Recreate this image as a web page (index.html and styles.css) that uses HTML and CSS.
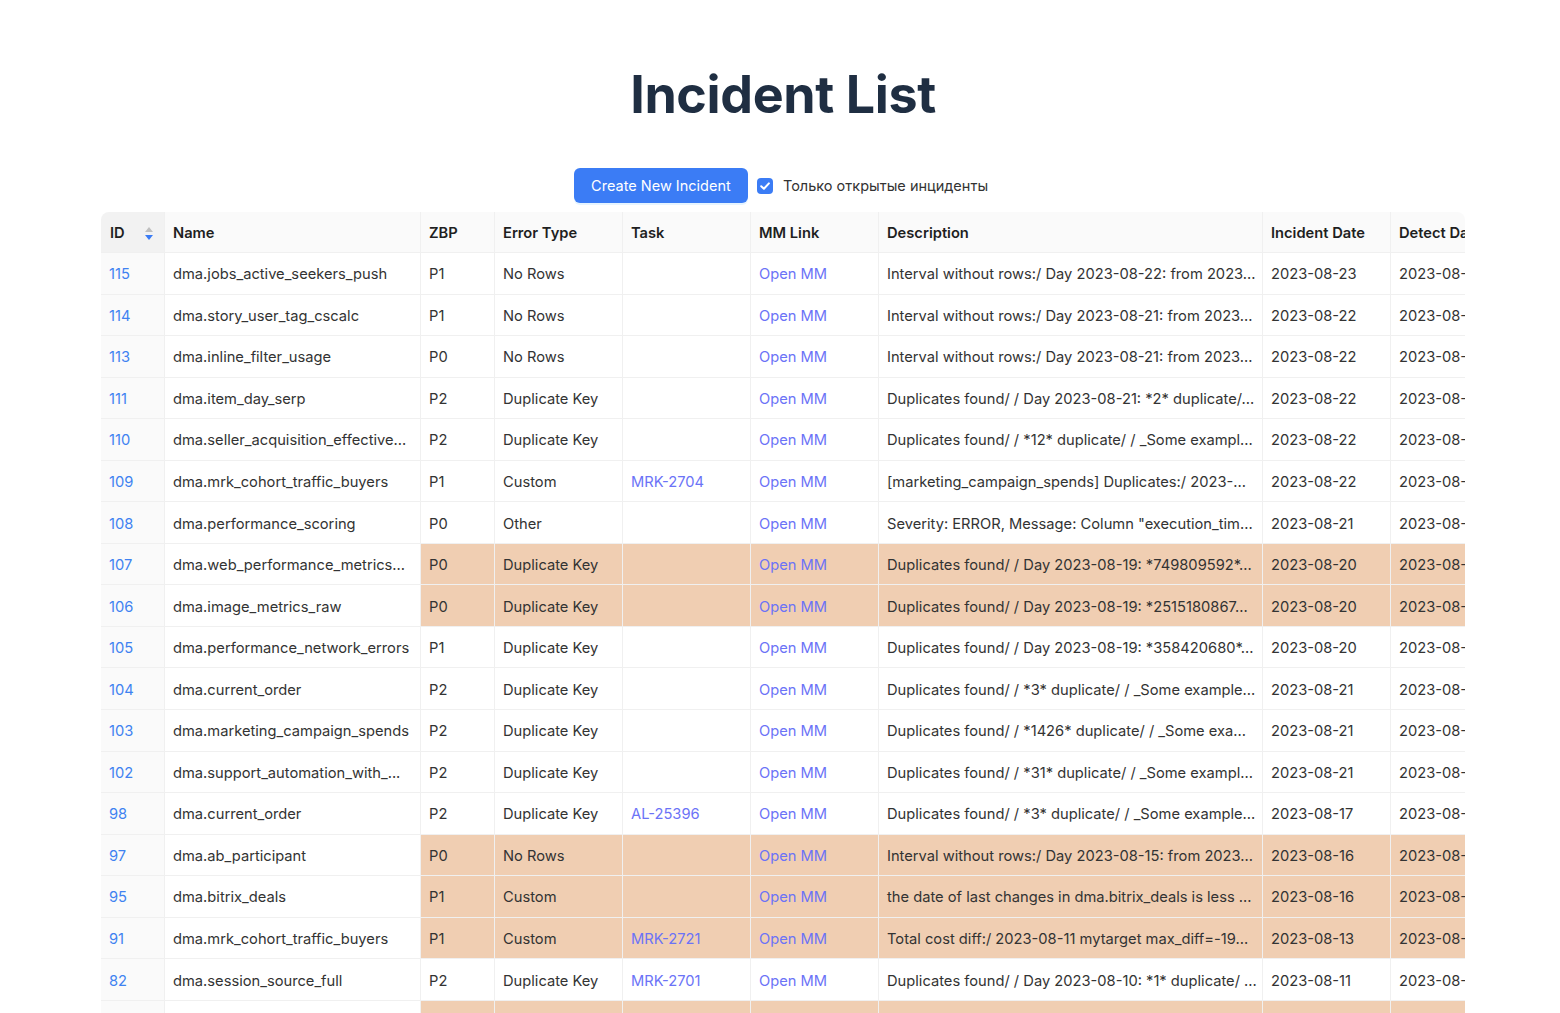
FILE: index.html
```html
<!DOCTYPE html>
<html lang="en">
<head>
<meta charset="utf-8">
<title>Incident List</title>
<link rel="stylesheet" href="styles.css">
</head>
<body>
<div class="page">
  <h1 class="title">Incident List</h1>
  <div class="toolbar">
    <button class="btn-primary" type="button">Create New Incident</button>
    <label class="check">
      <span class="check-box"><svg width="16" height="16" viewBox="0 0 16 16"><rect x="0" y="0" width="16" height="16" rx="4" fill="#3b7cf5"/><path d="M4.2 8.2 L6.9 10.8 L11.9 5.4" fill="none" stroke="#fff" stroke-width="2" stroke-linecap="round" stroke-linejoin="round"/></svg></span>
      <span>Только открытые инциденты</span>
    </label>
  </div>
  <div class="table-wrap">
    <table class="grid">
      <colgroup>
        <col class="c-id"><col class="c-name"><col class="c-zbp"><col class="c-err"><col class="c-task"><col class="c-mm"><col class="c-desc"><col class="c-date"><col class="c-date">
      </colgroup>
      <thead>
        <tr>
          <th class="sorted"><span class="th-sort">ID<svg class="sort" width="10" height="15" viewBox="0 0 10 15"><path d="M5 1 L9 6 L1 6 Z" fill="#bfbfbf"/><path d="M5 14 L9 9 L1 9 Z" fill="#3b7cf5"/></svg></span></th>
          <th>Name</th>
          <th>ZBP</th>
          <th>Error Type</th>
          <th>Task</th>
          <th>MM Link</th>
          <th>Description</th>
          <th>Incident Date</th>
          <th>Detect Date</th>
        </tr>
      </thead>
      <tbody>
        <tr><td class="id"><a>115</a></td><td class="name">dma.jobs_active_seekers_push</td><td>P1</td><td>No Rows</td><td></td><td><a class="lnk">Open MM</a></td><td>Interval without rows:/ Day 2023-08-22: from 2023...</td><td>2023-08-23</td><td>2023-08-23</td></tr>
        <tr><td class="id"><a>114</a></td><td class="name">dma.story_user_tag_cscalc</td><td>P1</td><td>No Rows</td><td></td><td><a class="lnk">Open MM</a></td><td>Interval without rows:/ Day 2023-08-21: from 2023...</td><td>2023-08-22</td><td>2023-08-22</td></tr>
        <tr><td class="id"><a>113</a></td><td class="name">dma.inline_filter_usage</td><td>P0</td><td>No Rows</td><td></td><td><a class="lnk">Open MM</a></td><td>Interval without rows:/ Day 2023-08-21: from 2023...</td><td>2023-08-22</td><td>2023-08-22</td></tr>
        <tr><td class="id"><a>111</a></td><td class="name">dma.item_day_serp</td><td>P2</td><td>Duplicate Key</td><td></td><td><a class="lnk">Open MM</a></td><td>Duplicates found/ / Day 2023-08-21: *2* duplicate/...</td><td>2023-08-22</td><td>2023-08-22</td></tr>
        <tr><td class="id"><a>110</a></td><td class="name">dma.seller_acquisition_effective...</td><td>P2</td><td>Duplicate Key</td><td></td><td><a class="lnk">Open MM</a></td><td>Duplicates found/ / *12* duplicate/ / _Some exampl...</td><td>2023-08-22</td><td>2023-08-22</td></tr>
        <tr><td class="id"><a>109</a></td><td class="name">dma.mrk_cohort_traffic_buyers</td><td>P1</td><td>Custom</td><td><a class="lnk">MRK-2704</a></td><td><a class="lnk">Open MM</a></td><td>[marketing_campaign_spends] Duplicates:/ 2023-...</td><td>2023-08-22</td><td>2023-08-22</td></tr>
        <tr><td class="id"><a>108</a></td><td class="name">dma.performance_scoring</td><td>P0</td><td>Other</td><td></td><td><a class="lnk">Open MM</a></td><td>Severity: ERROR, Message: Column "execution_tim...</td><td>2023-08-21</td><td>2023-08-21</td></tr>
        <tr class="hl"><td class="id"><a>107</a></td><td class="name">dma.web_performance_metrics...</td><td>P0</td><td>Duplicate Key</td><td></td><td><a class="lnk">Open MM</a></td><td>Duplicates found/ / Day 2023-08-19: *749809592*...</td><td>2023-08-20</td><td>2023-08-20</td></tr>
        <tr class="hl"><td class="id"><a>106</a></td><td class="name">dma.image_metrics_raw</td><td>P0</td><td>Duplicate Key</td><td></td><td><a class="lnk">Open MM</a></td><td>Duplicates found/ / Day 2023-08-19: *2515180867...</td><td>2023-08-20</td><td>2023-08-20</td></tr>
        <tr><td class="id"><a>105</a></td><td class="name">dma.performance_network_errors</td><td>P1</td><td>Duplicate Key</td><td></td><td><a class="lnk">Open MM</a></td><td>Duplicates found/ / Day 2023-08-19: *358420680*...</td><td>2023-08-20</td><td>2023-08-20</td></tr>
        <tr><td class="id"><a>104</a></td><td class="name">dma.current_order</td><td>P2</td><td>Duplicate Key</td><td></td><td><a class="lnk">Open MM</a></td><td>Duplicates found/ / *3* duplicate/ / _Some example...</td><td>2023-08-21</td><td>2023-08-21</td></tr>
        <tr><td class="id"><a>103</a></td><td class="name">dma.marketing_campaign_spends</td><td>P2</td><td>Duplicate Key</td><td></td><td><a class="lnk">Open MM</a></td><td>Duplicates found/ / *1426* duplicate/ / _Some exa...</td><td>2023-08-21</td><td>2023-08-21</td></tr>
        <tr><td class="id"><a>102</a></td><td class="name">dma.support_automation_with_...</td><td>P2</td><td>Duplicate Key</td><td></td><td><a class="lnk">Open MM</a></td><td>Duplicates found/ / *31* duplicate/ / _Some exampl...</td><td>2023-08-21</td><td>2023-08-21</td></tr>
        <tr><td class="id"><a>98</a></td><td class="name">dma.current_order</td><td>P2</td><td>Duplicate Key</td><td><a class="lnk">AL-25396</a></td><td><a class="lnk">Open MM</a></td><td>Duplicates found/ / *3* duplicate/ / _Some example...</td><td>2023-08-17</td><td>2023-08-17</td></tr>
        <tr class="hl"><td class="id"><a>97</a></td><td class="name">dma.ab_participant</td><td>P0</td><td>No Rows</td><td></td><td><a class="lnk">Open MM</a></td><td>Interval without rows:/ Day 2023-08-15: from 2023...</td><td>2023-08-16</td><td>2023-08-16</td></tr>
        <tr class="hl"><td class="id"><a>95</a></td><td class="name">dma.bitrix_deals</td><td>P1</td><td>Custom</td><td></td><td><a class="lnk">Open MM</a></td><td>the date of last changes in dma.bitrix_deals is less ...</td><td>2023-08-16</td><td>2023-08-16</td></tr>
        <tr class="hl"><td class="id"><a>91</a></td><td class="name">dma.mrk_cohort_traffic_buyers</td><td>P1</td><td>Custom</td><td><a class="lnk">MRK-2721</a></td><td><a class="lnk">Open MM</a></td><td>Total cost diff:/ 2023-08-11 mytarget max_diff=-19...</td><td>2023-08-13</td><td>2023-08-13</td></tr>
        <tr><td class="id"><a>82</a></td><td class="name">dma.session_source_full</td><td>P2</td><td>Duplicate Key</td><td><a class="lnk">MRK-2701</a></td><td><a class="lnk">Open MM</a></td><td>Duplicates found/ / Day 2023-08-10: *1* duplicate/ ...</td><td>2023-08-11</td><td>2023-08-11</td></tr>
        <tr class="hl"><td class="id"></td><td class="name"></td><td></td><td></td><td></td><td></td><td></td><td></td><td></td></tr>
      </tbody>
    </table>
  </div>
</div>
</body>
</html>
```

FILE: styles.css
```css
* { box-sizing: border-box; }
html, body { margin: 0; padding: 0; background: #fff; }
body {
  font-family: Inter, "Noto Sans", "DejaVu Sans", sans-serif;
  color: #2b2b2b;
  height: 1013px;
  overflow: hidden;
}
.page {
  padding: 0 95px 0 101px;
}
.title {
  margin: 0;
  padding-top: 64px;
  height: 148px;
  text-align: center;
  font-size: 52px;
  line-height: 62px;
  font-weight: 700;
  letter-spacing: -0.4px;
  color: #1f2e42;
}
.toolbar {
  display: flex;
  justify-content: center;
  align-items: flex-start;
  gap: 9px;
  padding-top: 20px;
  padding-right: 4px;
  height: 64px;
}
.btn-primary {
  height: 35px;
  width: 174px;
  border: none;
  border-radius: 6px;
  background: #3b7cf5;
  color: #fff;
  font-family: inherit;
  font-size: 14.5px;
  padding: 0;
  box-shadow: 0 2px 0 rgba(5,145,255,0.1);
}
.check {
  display: flex;
  align-items: center;
  gap: 10px;
  height: 35px;
  font-size: 14.5px;
  color: #333;
}
.check-box { display: flex; }
.table-wrap {
  width: 1364px;
  overflow: hidden;
  border-radius: 8px 8px 0 0;
}
.grid {
  border-collapse: separate;
  border-spacing: 0;
  table-layout: fixed;
  width: 1418px;
  font-size: 14.7px;
}
.c-id { width: 64px; }
.c-name { width: 256px; }
.c-zbp { width: 74px; }
.c-err { width: 128px; }
.c-task { width: 128px; }
.c-mm { width: 128px; }
.c-desc { width: 384px; }
.c-date { width: 128px; }
.grid th, .grid td {
  text-align: left;
  padding: 2px 8px 0 8px;
  white-space: nowrap;
  overflow: hidden;
  text-overflow: clip;
  border-right: 1px solid #f0f0f0;
  border-bottom: 1px solid #f0f0f0;
}
.grid th {
  height: 41px;
  background: #fafafa;
  font-weight: 600;
  color: #1f1f1f;
}
.grid th.sorted { background: #f2f2f2; }
.th-sort {
  display: flex;
  align-items: center;
  justify-content: space-between;
  padding-left: 1px;
  padding-right: 2px;
}
.sort { display: block; }
.grid td {
  height: 41.55px;
  background: #fff;
  color: #333;
}
.grid td.id { background: #fafafa; }
.grid tr.hl td { background: #f0ceb2; }
.grid tr.hl td.id { background: #fafafa; }
.grid tr.hl td.name { background: #fff; }
.grid td.id a { color: #3f82f1; }
.lnk { color: #6b73f7; }
```
